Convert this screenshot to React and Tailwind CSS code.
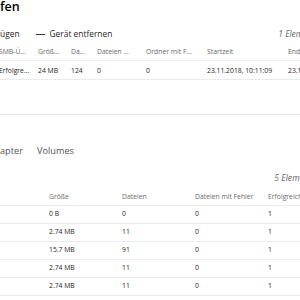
export default function App() {
  const rows = [
    ["0 B", "0", "0", "1"],
    ["2.74 MB", "11", "0", "1"],
    ["15.7 MB", "91", "0", "1"],
    ["2.74 MB", "11", "0", "1"],
    ["2.74 MB", "11", "0", "1"],
  ];
  return (
    <div className="w-[300px] h-[300px] overflow-hidden bg-white font-['Open_Sans',sans-serif] text-[#252525]">
      <div className="w-[320px] -ml-[1px]">
        <div className="h-[14px] leading-[14px] text-[12.5px] font-semibold text-black pl-[1px]">fen</div>
        <div className="mt-[15px] h-[10px] flex items-center text-[8.4px] leading-[10px] whitespace-nowrap">
          <span className="pl-[1px]">ügen</span>
          <span className="ml-[16px] w-[9px] h-px bg-[#333]"></span>
          <span className="ml-[5px]">Gerät entfernen</span>
          <span className="ml-auto italic text-[#666] text-[8.4px]">1 Elemente</span>
        </div>
        <div className="mt-[5px] text-[6.8px] whitespace-nowrap">
          <div className="grid grid-cols-[39px_33px_26px_49px_61px_81px_40px] h-[17px] items-center border-b border-[#ebebeb] text-[#6b6b6b]">
            <span>SMB-Ü...</span>
            <span>Größ...</span>
            <span>Da...</span>
            <span>Dateien ...</span>
            <span>Ordner mit F...</span>
            <span>Startzeit</span>
            <span>Endzeit</span>
          </div>
          <div className="grid grid-cols-[39px_33px_26px_49px_61px_81px_40px] h-[19px] items-center pt-[2px] border-b border-[#ebebeb]">
            <span>Erfolgre...</span>
            <span>24 MB</span>
            <span>124</span>
            <span>0</span>
            <span>0</span>
            <span>23.11.2018, 10:11:09</span>
            <span>23.11.2018</span>
          </div>
        </div>
        <div className="mt-[34px] h-px bg-[#e3e3e3]"></div>
        <div className="mt-[30px] h-[12px] flex items-center text-[9.2px] text-[#555] whitespace-nowrap">
          <span className="pl-[1px]">apter</span>
          <span className="ml-[14px]">Volumes</span>
        </div>
        <div className="mt-[15px] h-[12px] flex items-center whitespace-nowrap">
          <span className="ml-auto italic text-[#666] text-[8.6px] pr-[3px]">5 Elemente</span>
        </div>
        <div className="mt-[5px] text-[6.8px] whitespace-nowrap">
          <div className="grid grid-cols-[50px_73px_73px_73px_73px] h-[17px] items-center border-b border-[#ebebeb] text-[#6b6b6b]">
            <span></span>
            <span>Größe</span>
            <span>Dateien</span>
            <span>Dateien mit Fehler</span>
            <span>Erfolgreich</span>
          </div>
          {rows.map((r, i) => (
            <div key={i} className="grid grid-cols-[50px_73px_73px_73px_73px] h-[18px] items-center border-b border-[#ebebeb]">
              <span></span>
              {r.map((c, j) => (
                <span key={j}>{c}</span>
              ))}
            </div>
          ))}
        </div>
      </div>
    </div>
  );
}
